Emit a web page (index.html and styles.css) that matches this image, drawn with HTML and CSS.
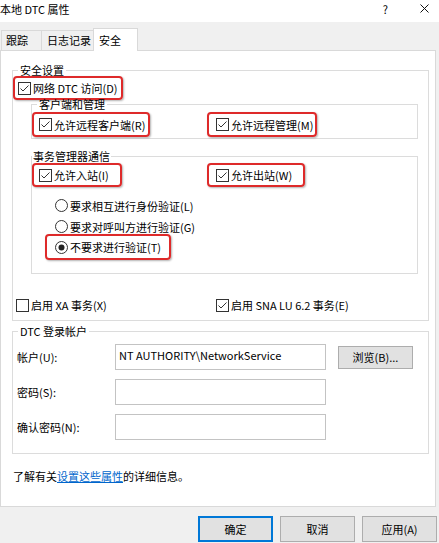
FILE: index.html
```html
<!DOCTYPE html>
<html lang="zh-CN">
<head>
<meta charset="utf-8">
<title>本地 DTC 属性</title>
<link rel="stylesheet" href="styles.css">
</head>
<body>
<div class="titlebar">
  <span class="title">本地 DTC 属性</span>
  <span class="help">?</span>
  <span class="close"><svg width="9" height="9" viewBox="0 0 9 9"><path d="M0.5 0.5L8.5 8.5M8.5 0.5L0.5 8.5" stroke="#111" stroke-width="1" fill="none"/></svg></span>
</div>
<div class="tabs">
  <div class="tab t1">跟踪</div>
  <div class="tab t2">日志记录</div>
  <div class="tab t3">安全</div>
</div>
<div class="panel">
  <fieldset class="group outer">
    <legend class="lg-outer">安全设置</legend>
    <label class="chk hl net"><svg class="cb" width="13" height="13" viewBox="0 0 13 13"><rect x="0.5" y="0.5" width="12" height="12" fill="#fff" stroke="#333"/><path d="M2.5 6.5L5 9L10.5 3.5" fill="none" stroke="#333"/></svg>网络 DTC 访问(D)</label>

    <fieldset class="group inner inner1">
      <legend class="lg-inner1">客户端和管理</legend>
      <div class="pair pair1">
        <label class="chk hl c-left pr3"><svg class="cb" width="13" height="13" viewBox="0 0 13 13"><rect x="0.5" y="0.5" width="12" height="12" fill="#fff" stroke="#333"/><path d="M2.5 6.5L5 9L10.5 3.5" fill="none" stroke="#333"/></svg>允许远程客户端(R)</label>
        <label class="chk hl c-right pr2"><svg class="cb" width="13" height="13" viewBox="0 0 13 13"><rect x="0.5" y="0.5" width="12" height="12" fill="#fff" stroke="#333"/><path d="M2.5 6.5L5 9L10.5 3.5" fill="none" stroke="#333"/></svg>允许远程管理(M)</label>
      </div>
    </fieldset>

    <fieldset class="group inner inner2">
      <legend class="lg-inner2">事务管理器通信</legend>
      <div class="pair pair2">
        <label class="chk hl c-left pr11"><svg class="cb" width="13" height="13" viewBox="0 0 13 13"><rect x="0.5" y="0.5" width="12" height="12" fill="#fff" stroke="#333"/><path d="M2.5 6.5L5 9L10.5 3.5" fill="none" stroke="#333"/></svg>允许入站(I)</label>
        <label class="chk hl c-right pr11"><svg class="cb" width="13" height="13" viewBox="0 0 13 13"><rect x="0.5" y="0.5" width="12" height="12" fill="#fff" stroke="#333"/><path d="M2.5 6.5L5 9L10.5 3.5" fill="none" stroke="#333"/></svg>允许出站(W)</label>
      </div>
      <div class="radios">
        <label class="radio"><svg class="rb" width="13" height="13" viewBox="0 0 13 13"><circle cx="6.5" cy="6.5" r="6" fill="#fff" stroke="#333"/></svg>要求相互进行身份验证(L)</label>
        <label class="radio"><svg class="rb" width="13" height="13" viewBox="0 0 13 13"><circle cx="6.5" cy="6.5" r="6" fill="#fff" stroke="#333"/></svg>要求对呼叫方进行验证(G)</label>
        <label class="radio hl radio-hl"><svg class="rb" width="13" height="13" viewBox="0 0 13 13"><circle cx="6.5" cy="6.5" r="6" fill="#fff" stroke="#333"/><circle cx="6.5" cy="6.5" r="3" fill="#222"/></svg>不要求进行验证(T)</label>
      </div>
    </fieldset>

    <div class="pair xa-row">
      <label class="chk plain"><svg class="cb" width="13" height="13" viewBox="0 0 13 13"><rect x="0.5" y="0.5" width="12" height="12" fill="#fff" stroke="#333"/></svg>启用 XA 事务(X)</label>
      <label class="chk plain"><svg class="cb" width="13" height="13" viewBox="0 0 13 13"><rect x="0.5" y="0.5" width="12" height="12" fill="#fff" stroke="#333"/><path d="M2.5 6.5L5 9L10.5 3.5" fill="none" stroke="#333"/></svg>启用 SNA LU 6.2 事务(E)</label>
    </div>
  </fieldset>

  <fieldset class="group account">
    <legend class="lg-outer">DTC 登录帐户</legend>
    <div class="form">
      <span class="flabel">帐户(U):</span>
      <div class="field">NT AUTHORITY\NetworkService</div>
      <button class="btn browse" type="button">浏览(B)...</button>
      <span class="flabel">密码(S):</span>
      <div class="field"></div>
      <span></span>
      <span class="flabel">确认密码(N):</span>
      <div class="field"></div>
      <span></span>
    </div>
  </fieldset>

  <p class="info">了解有关<a class="link" href="#">设置这些属性</a>的详细信息。</p>
</div>
<div class="footer">
  <button class="btn dlg default" type="button">确定</button>
  <button class="btn dlg" type="button">取消</button>
  <button class="btn dlg" type="button">应用(A)</button>
</div>
</body>
</html>
```
FILE: styles.css
```css
* { box-sizing: border-box; }
html, body { margin: 0; padding: 0; }
body {
  width: 439px;
  height: 543px;
  overflow: hidden;
  background: #f0f0f0;
  color: #000;
  font-family: "Noto Sans CJK SC", "Microsoft YaHei", sans-serif;
  font-size: 11px;
  line-height: 16px;
}

/* title bar */
.titlebar {
  height: 22px;
  background: #fff;
  display: flex;
  align-items: flex-start;
  padding-top: 1px;
}
.title { flex: 1; }
.help { margin-right: 32px; font-size: 11px; }
.close { width: 9px; margin-right: 10px; padding-top: 3px; display: flex; }

/* tabs */
.tabs {
  height: 28px;
  display: flex;
  align-items: flex-end;
  padding-left: 1px;
}
.tab {
  height: 20px;
  border: 1px solid #d9d9d9;
  border-bottom: none;
  background: #f0f0f0;
  line-height: 19px;
  padding-left: 5px;
  white-space: nowrap;
}
.t1 { width: 41px; padding-left: 4px; }
.t2 { width: 52px; border-left: none; }
.t3 {
  width: 45px;
  height: 23px;
  margin-left: -1px;
  margin-bottom: -1px;
  background: #fff;
  line-height: 22px;
  position: relative;
  z-index: 1;
}

/* panel */
.panel {
  width: 436px;
  height: 457px;
  background: #fff;
  border: 1px solid #d9d9d9;
}

.group {
  border: 1px solid #dcdcdc;
  margin: 0;
  padding: 0;
  min-width: 0;
}
.group > legend { padding: 0 2px; line-height: 16px; }
.group > .lg-outer { margin-left: 5px; }
.group > .lg-inner1 { margin-left: 5px; }
.group > .lg-inner2 { margin-left: 0; padding: 0 1px; }

.group.outer { margin: 11px 6px 0 11px; padding-bottom: 5px; }
.group.inner { margin-right: 10px; margin-left: 18px; }
.group.inner1 { margin-top: -4px; padding-bottom: 1px; }
.group.inner2 { margin-top: 9px; padding-bottom: 15px; }

.chk {
  display: flex;
  align-items: center;
  width: fit-content;
  white-space: nowrap;
}
.cb, .rb { flex: none; margin-right: 2px; }

.hl {
  border: 2px solid #de2a2a;
  border-radius: 4px;
  box-shadow: 1px 1px 2px rgba(0, 0, 0, 0.3);
}
.net { height: 24px; margin-top: -2px; padding: 0 3px 0 3px; }

.pair { display: grid; grid-template-columns: 175px auto; align-items: center; }
.pair1 { height: 25px; }
.pair1 .chk { height: 25px; }
.pair2 { margin-top: -1px; height: 24px; }
.pair2 .chk { height: 24px; }
.c-left { padding-left: 5px; }
.c-right { padding-left: 7px; }
.pr2 { padding-right: 2px; }
.pr3 { padding-right: 3px; }
.pr11 { padding-right: 11px; }

.radios { margin-top: 8px; }
.radio {
  display: flex;
  align-items: center;
  width: fit-content;
  height: 21px;
  margin-left: 13px;
  padding-left: 8px;
  border: 2px solid transparent;
  white-space: nowrap;
}
.radio .rb { margin-right: 2px; }
.radio.radio-hl {
  height: 26px;
  margin-top: -3px;
  margin-bottom: -2px;
  padding-right: 8px;
  border-color: #de2a2a;
}

.pair.xa-row {
  grid-template-columns: 200px auto;
  height: 20px;
  margin: 21px 0 0 3px;
}

/* account */
.group.account { margin: 2px 6px 0 11px; padding-bottom: 13px; }
.form {
  display: grid;
  grid-template-columns: 86px 211px 75px;
  column-gap: 12px;
  row-gap: 9px;
  align-items: center;
  margin: 5px 0 0 4px;
}
.field {
  height: 26px;
  border: 1px solid #c3c3c3;
  background: #fff;
  padding: 2px 0 0 3px;
  white-space: nowrap;
}
.btn {
  font-family: inherit;
  font-size: 11px;
  color: #000;
  background: #e1e1e1;
  border: 1px solid #adadad;
  border-radius: 0;
  padding: 0;
  margin: 0;
}
.browse { height: 23px; }

.info { margin: 14px 0 0 12px; }
.link { color: #0066cc; text-decoration: underline; }

/* footer */
.footer {
  display: flex;
  justify-content: flex-end;
  gap: 7px;
  margin-top: 9px;
  padding-right: 2px;
}
.dlg { width: 75px; height: 26px; }
.btn.default { border-color: #0078d7; box-shadow: inset 0 0 0 1px #0078d7; }
```
